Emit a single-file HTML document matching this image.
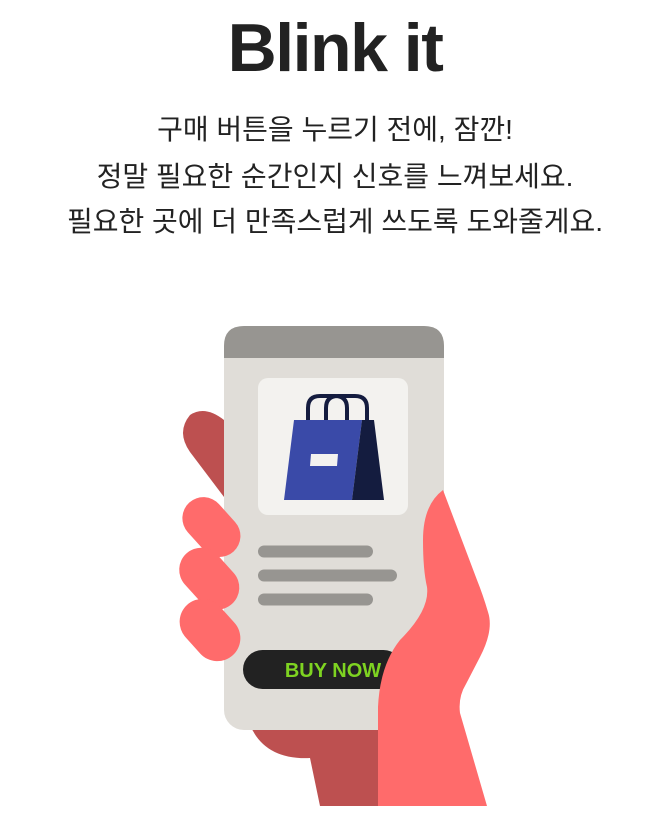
<!DOCTYPE html>
<html><head><meta charset="utf-8"><style>
html,body{margin:0;padding:0;background:#fff;width:670px;height:820px;overflow:hidden}
.t{position:absolute;left:0;width:670px;text-align:center;color:#222}
h1{position:absolute;top:1px;left:0;width:670px;margin:0;text-align:center;font:bold 68px/94px "Liberation Sans",sans-serif;letter-spacing:-1.5px;color:#222}
.k{font:28px "Liberation Sans","Noto Sans CJK KR",sans-serif;line-height:28px}
svg{position:absolute;left:0;top:0}
</style></head><body>
<h1>Blink it</h1>
<div class="t k" style="top:116px">구매 버튼을 누르기 전에, 잠깐!</div>
<div class="t k" style="top:163px">정말 필요한 순간인지 신호를 느껴보세요.</div>
<div class="t k" style="top:208px">필요한 곳에 더 만족스럽게 쓰도록 도와줄게요.</div>
<svg width="670" height="820" viewBox="0 0 670 820">
<path d="M224,420 Q205,405 190,415 Q176,432 190,452 L224,497 Z" fill="#bd5050"/>
<path d="M250,725 Q265,760 310,758 L320,806 L380,806 L380,725 Z" fill="#bd5050"/>
<rect x="224" y="326" width="220" height="404" rx="20" fill="#e0ddd8"/>
<path d="M224,358 V346 Q224,326 244,326 H424 Q444,326 444,346 V358 Z" fill="#979591"/>
<rect x="258" y="378" width="150" height="137" rx="10" fill="#f3f2ef"/>
<path d="M308,428 V408 Q308,396 320,396 H335 Q347,396 347,408 V428" fill="none" stroke="#141c3f" stroke-width="4"/>
<path d="M326,420 V408 Q326,396 338,396 H355 Q367,396 367,408 V420" fill="none" stroke="#141c3f" stroke-width="4"/>
<path d="M284,500 L294,420 L362,420 L352,500 Z" fill="#3a4aa8"/>
<path d="M362,420 L374,420 L384,500 L352,500 Z" fill="#141c3f"/>
<path d="M311,454 L338,454 L337,466 L310,466 Z" fill="#f3f2ef"/>
<g stroke="#979591" stroke-width="12" stroke-linecap="round">
<line x1="264" y1="551.5" x2="367" y2="551.5"/>
<line x1="264" y1="575.5" x2="391" y2="575.5"/>
<line x1="264" y1="599.5" x2="367" y2="599.5"/>
</g>
<rect x="243" y="650" width="160" height="39" rx="19.5" fill="#222"/>
<text x="333" y="677" text-anchor="middle" font-family="Liberation Sans,sans-serif" font-weight="bold" font-size="20" fill="#7ed321">BUY NOW</text>
<g fill="#ff6b6b">
<rect x="178" y="505" width="66" height="42" rx="21" transform="rotate(48 210 527)"/>
<rect x="176" y="557" width="68" height="44" rx="22" transform="rotate(48 210 578)"/>
<rect x="176" y="607" width="68" height="46" rx="23" transform="rotate(48 210 630)"/>
<path d="M443,490 Q423,505 423,540 Q423,570 427,587 Q430,610 400,640 Q380,665 378,707 L378,806 L487,806 L460,713 Q458,697 466,684 L480,657 Q494,630 488,612 Q483,595 477,580 Z"/>
</g>
</svg>
</body></html>
